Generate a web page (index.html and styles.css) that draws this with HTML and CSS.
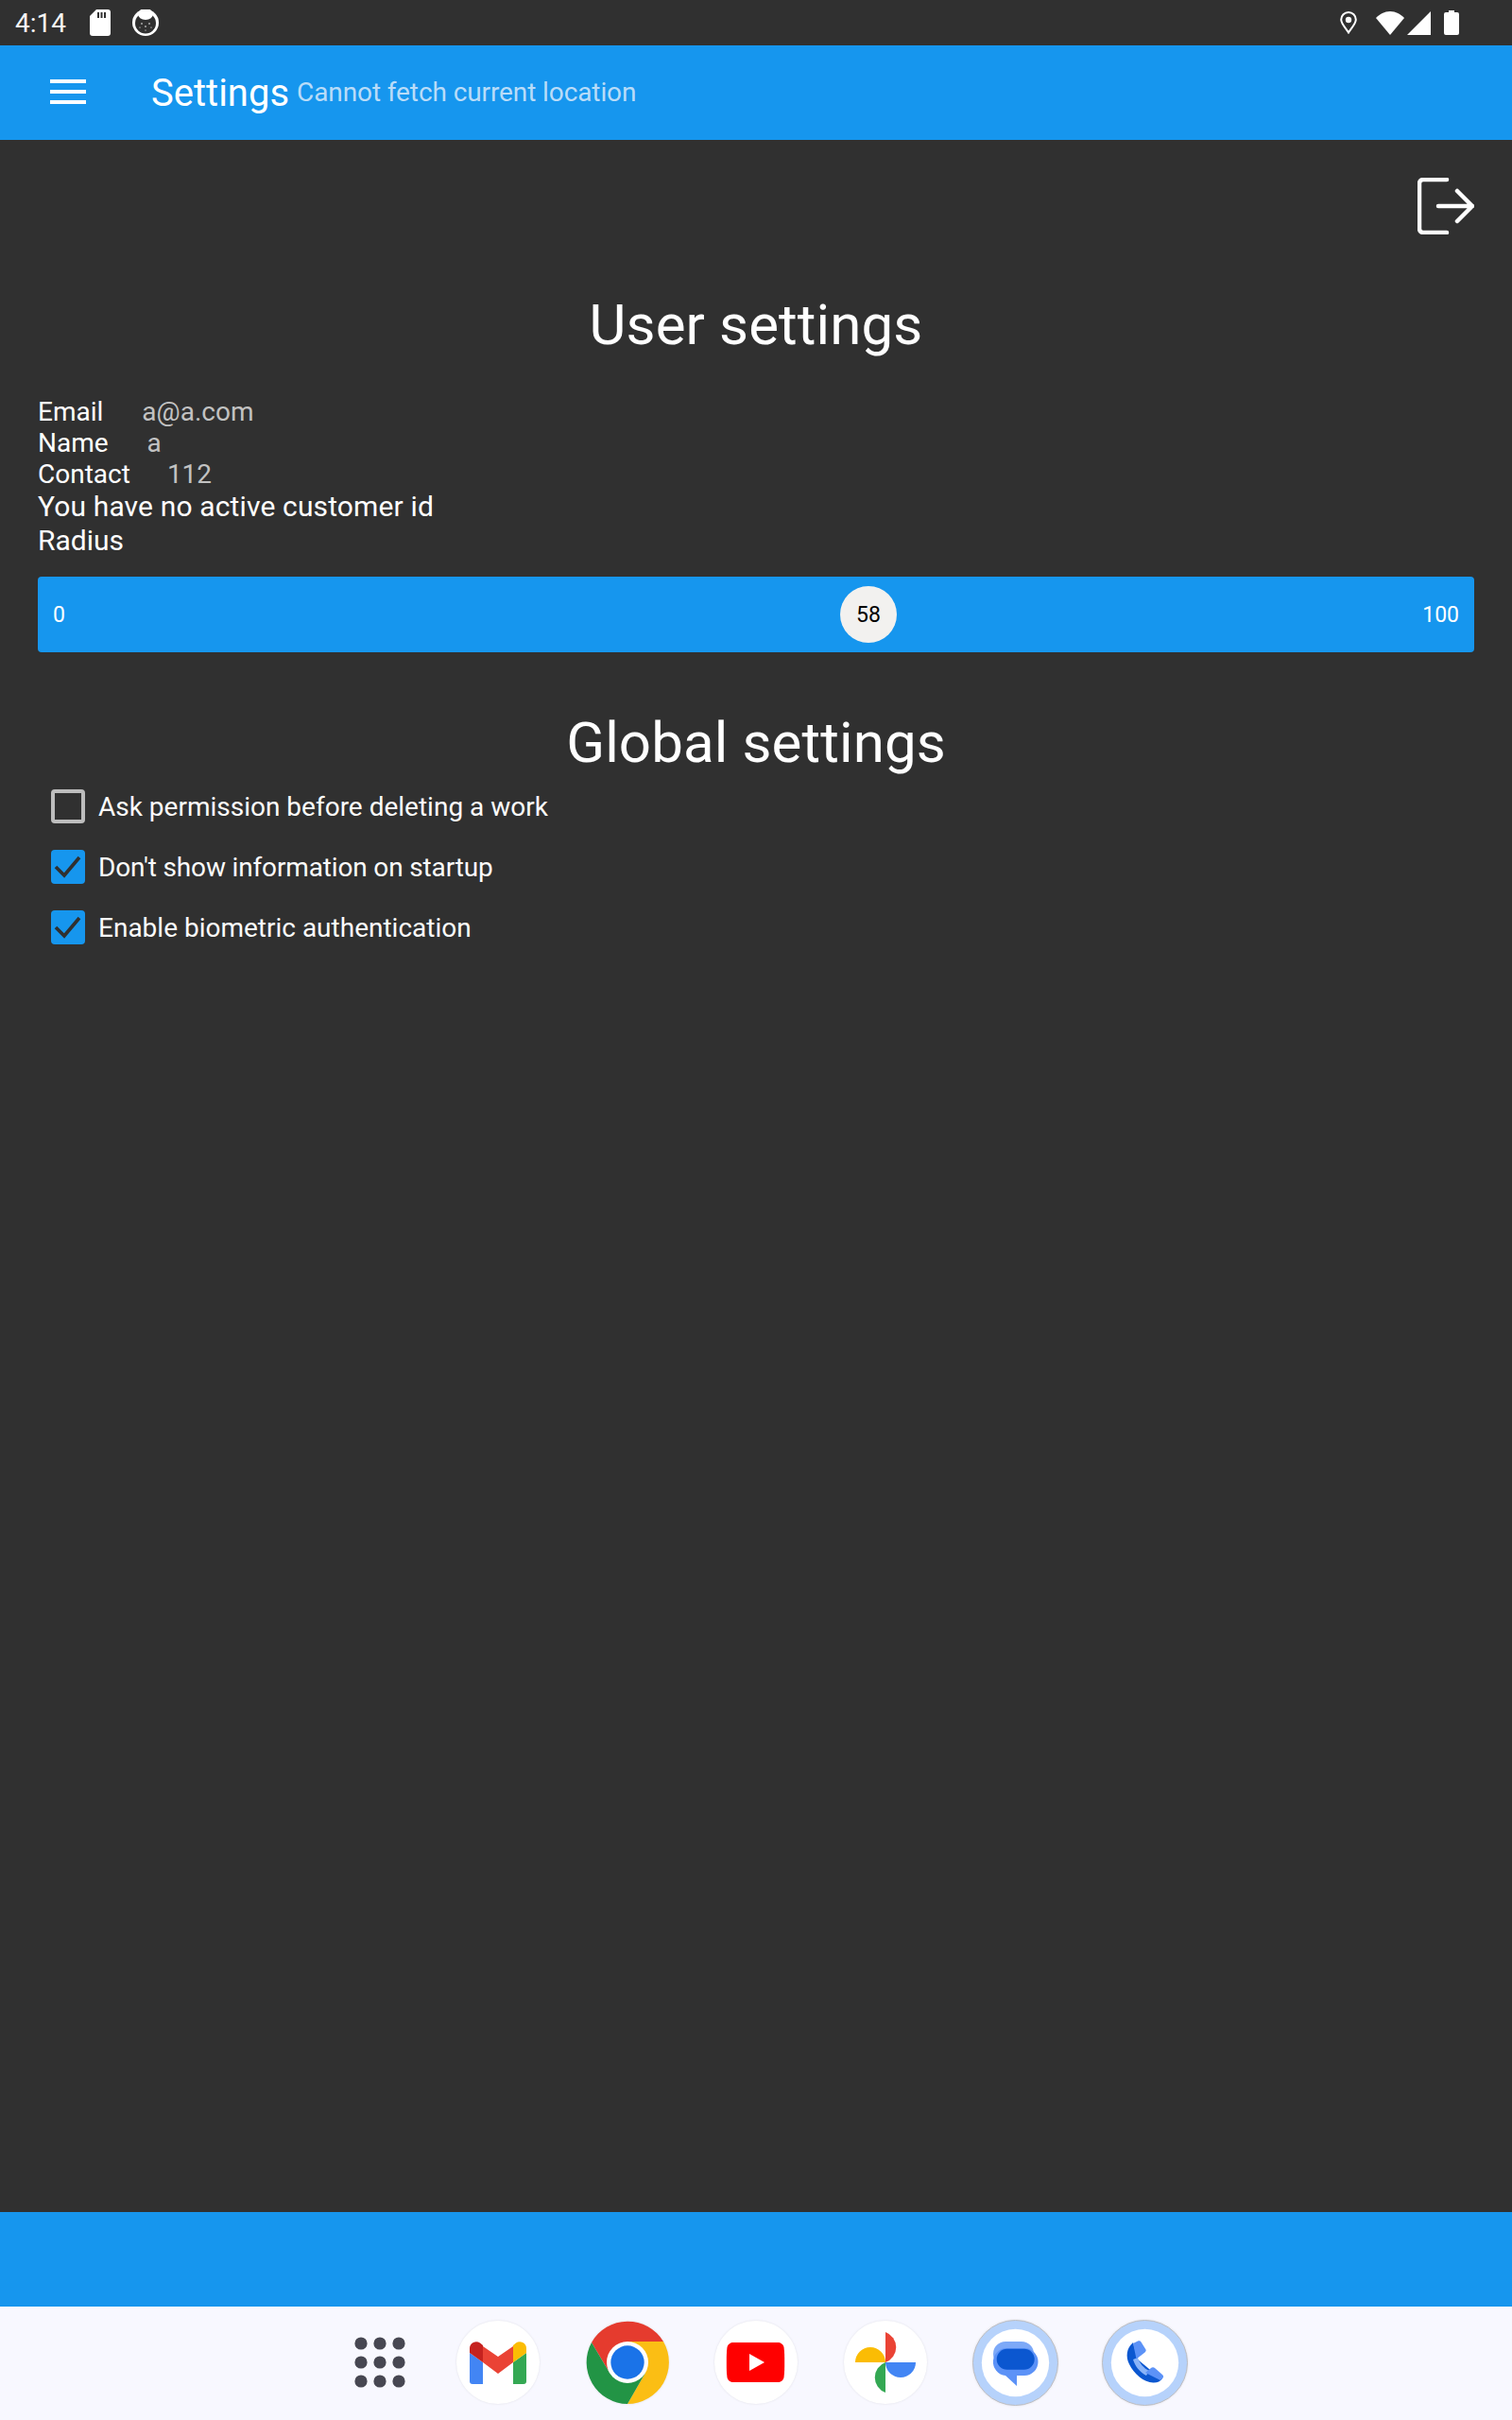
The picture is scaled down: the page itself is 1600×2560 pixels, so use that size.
FILE: index.html
```html
<!DOCTYPE html>
<html lang="en">
<head>
<meta charset="utf-8">
<title>Settings</title>
<link rel="stylesheet" href="styles.css">
</head>
<body>
<div class="screen">
  <div class="status">
    <span class="time">4:14</span>
    <svg class="ic-sd" viewBox="0 0 22 28"><path fill="#fff" d="M7 0h12a3 3 0 0 1 3 3v22a3 3 0 0 1-3 3H3a3 3 0 0 1-3-3V7z"/><path fill="#303030" d="M8 3h2v6H8zM11.500 3h2v6h-2zM15 3h2v6h-2z"/></svg>
    <svg class="ic-cat" viewBox="0 0 28 28"><circle cx="14" cy="14" r="14" fill="#fff"/><circle cx="14" cy="14.500" r="11" fill="#303030"/><ellipse cx="14" cy="5" rx="8" ry="6" fill="#fff"/><g fill="#fff"><circle cx="10" cy="15" r=".8"/><circle cx="18" cy="15" r=".8"/><circle cx="14" cy="18" r=".8"/><circle cx="8" cy="19" r=".6"/><circle cx="20" cy="19" r=".6"/><circle cx="14" cy="22" r=".6"/></g></svg>
    <span class="status-gap"></span>
    <svg class="ic-pin" viewBox="0 0 18 24"><path fill="none" stroke="#fff" stroke-width="2" d="M9 22.500C5.500 17 1.200 13 1.200 8.800a7.800 7.800 0 0 1 15.600 0C16.800 13 12.500 17 9 22.500z"/><circle cx="9" cy="9" r="3.200" fill="#fff"/></svg>
    <svg class="ic-wifi" viewBox="0 0 30 25"><path fill="#fff" d="M15 25 0 7C4 3 9 0 15 0s11 3 15 7z"/></svg>
    <svg class="ic-signal" viewBox="0 0 25 25"><path fill="#fff" d="M25 0v25H0z"/></svg>
    <svg class="ic-batt" viewBox="0 0 16 26"><path fill="#fff" d="M5 0h6v2h3a2 2 0 0 1 2 2v20a2 2 0 0 1-2 2H2a2 2 0 0 1-2-2V4a2 2 0 0 1 2-2h3z"/></svg>
  </div>

  <header class="appbar">
    <svg class="menu" viewBox="0 0 38 26"><path fill="#fff" d="M0 0h38v4H0zM0 11h38v4H0zM0 22h38v4H0z"/></svg>
    <span class="app-title">Settings</span>
    <span class="app-sub">Cannot fetch current location</span>
  </header>

  <main class="content">
    <div class="logout-row">
      <svg class="logout" viewBox="0 0 60 60"><path fill="none" stroke="#fff" stroke-width="4.500" stroke-linecap="round" stroke-linejoin="round" d="M31 2H6a4 4 0 0 0-4 4v48a4 4 0 0 0 4 4h25M22 30h36M42 14l16 16-16 16"/></svg>
    </div>
    <h1 class="heading heading-user">User settings</h1>
    <div class="info">
      <div class="info-line"><span>Email</span><span class="val">a@a.com</span></div>
      <div class="info-line"><span>Name</span><span class="val">a</span></div>
      <div class="info-line"><span>Contact</span><span class="val val-contact">112</span></div>
      <div class="info-line customer">You have no active customer id</div>
      <div class="info-line radius">Radius</div>
    </div>
    <div class="slider">
      <span>0</span>
      <span class="thumb">58</span>
      <span>100</span>
    </div>
    <h1 class="heading heading-global">Global settings</h1>
    <ul class="checks">
      <li class="check"><span class="box"></span>Ask permission before deleting a work</li>
      <li class="check check-tight"><span class="box on"><svg viewBox="0 0 36 36"><path fill="none" stroke="#303030" stroke-width="3.600" d="M5 18l9 9L30 8"/></svg></span>Don't show information on startup</li>
      <li class="check"><span class="box on"><svg viewBox="0 0 36 36"><path fill="none" stroke="#303030" stroke-width="3.600" d="M5 18l9 9L30 8"/></svg></span>Enable biometric authentication</li>
    </ul>
  </main>

  <div class="footer-bar"></div>

  <nav class="dock">
    <svg class="apps" viewBox="0 0 54 54"><g fill="#474752"><circle cx="7" cy="7" r="6.600"/><circle cx="27" cy="7" r="6.600"/><circle cx="47" cy="7" r="6.600"/><circle cx="7" cy="27" r="6.600"/><circle cx="27" cy="27" r="6.600"/><circle cx="47" cy="27" r="6.600"/><circle cx="7" cy="47" r="6.600"/><circle cx="27" cy="47" r="6.600"/><circle cx="47" cy="47" r="6.600"/></g></svg>

    <svg class="dock-ic" viewBox="0 0 88 88"><circle cx="44" cy="44" r="44" fill="#fff"/>
      <path fill="#4285f4" d="M14 34l14 10v23H17a3 3 0 0 1-3-3z"/>
      <path fill="#34a853" d="M60 44l14-10v30a3 3 0 0 1-3 3H60z"/>
      <path fill="#ea4335" d="M28 27l16 11 16-11v17L44 56 28 44z"/>
      <path fill="#c5221f" d="M14 34v-5a7 7 0 0 1 11-5.500l3 2.500v18z"/>
      <path fill="#fbbc04" d="M60 26l3-2.500a7 7 0 0 1 11 5.500v5L60 44z"/>
    </svg>

    <svg class="dock-ic" viewBox="0 0 88 88">
      <path fill="#e53b2e" d="M6 23A44 44 0 0 1 82 22H44L25 55z"/>
      <path fill="#fbbe14" d="M82 22A44 44 0 0 1 44 88L63 55 44 22z"/>
      <path fill="#229445" d="M6 23 25 55H63L44 88A44 44 0 0 1 6 23z"/>
      <circle cx="44" cy="44" r="22" fill="#fff"/><circle cx="44" cy="44" r="17.700" fill="#1a73e8"/>
    </svg>

    <svg class="dock-ic" viewBox="0 0 88 88"><circle cx="44" cy="44" r="44" fill="#fff"/>
      <path fill="#f00" d="M20 23h47c3 0 6 2 6.500 5 .7 5 .7 10 .7 16s0 11-.7 16c-.5 3-3.500 5-6.500 5H20c-3 0-6-2-6.500-5-.7-5-.7-10-.7-16s0-11 .7-16c.5-3 3.500-5 6.500-5z"/>
      <path fill="#fff" d="M37 35l16 9-16 9z"/>
    </svg>

    <svg class="dock-ic" viewBox="0 0 88 88"><circle cx="44" cy="44" r="44" fill="#fff"/>
      <path fill="#ea4335" d="M44 12a17 17 0 0 1 0 32z"/>
      <path fill="#4285f4" d="M44 44h32a16 16 0 0 1-32 0z"/>
      <path fill="#34a853" d="M44 44v32a17 17 0 0 1 0-32z"/>
      <path fill="#fbbc04" d="M44 44H12a16 16 0 0 1 32 0z"/>
    </svg>

    <svg class="dock-ic wide" viewBox="0 0 91 91"><circle cx="45.500" cy="45.500" r="45" fill="#b6d2fb" stroke="#bdbdc0"/><circle cx="45.500" cy="45.500" r="35.700" fill="#fff"/>
      <rect x="22" y="23" width="43" height="26" rx="13" fill="#7da9f8"/>
      <path fill="#5c92f7" d="M38 30h17a14.500 14.500 0 0 1 0 29h-8v11L35 59a14.500 14.500 0 0 1 3-29z"/>
      <rect x="25.700" y="30.700" width="40" height="22" rx="11" fill="#0b57d0"/>
    </svg>

    <svg class="dock-ic wide" viewBox="0 0 91 91"><circle cx="45.500" cy="45.500" r="45" fill="#b6d2fb" stroke="#bdbdc0"/><circle cx="45.500" cy="45.500" r="35.700" fill="#fff"/>
      <path fill="#0b57d0" d="M33 24C26 30 25 39 29 47c5 10 16 20 26 19.500 4 0 7-1.500 9-4.500L50 52 38 42z"/>
      <path fill="#8ab4f8" d="M33 42l5-2c2 6 6 11 12 14l-3 5c-7-4-12-10-14-17z"/>
      <path fill="#5c92f7" d="M33 25l5-2.500c1.500-.5 3 0 3.500 1l5 8c.5 1 0 2-1 3l-9 7zM46 56l6-5c1-1 3-1 4 0l8 7c1.500 1.500 1.500 3 0 4l-2 2z"/>
    </svg>
  </nav>
</div>
</body>
</html>
```
FILE: styles.css
```css
* { box-sizing: border-box; }
html, body { margin: 0; padding: 0; }
body { font-family: Roboto, "Noto Sans", sans-serif; background: #303030; color: #fff; }
.screen { width: 1600px; height: 2560px; display: flex; flex-direction: column; background: #303030; overflow: hidden; }

.status { height: 48px; flex: none; display: flex; align-items: center; padding: 0 56px 0 16px; }
.time { font-size: 28px; font-weight: 400; width: 79px; color: #f5f5f5; }
.ic-sd { width: 22px; height: 28px; }
.ic-cat { width: 28px; height: 28px; margin-left: 23px; }
.status-gap { flex: 1; }
.ic-pin { width: 18px; height: 24px; margin-right: 20px; }
.ic-wifi { width: 30px; height: 25px; margin-right: 3px; }
.ic-signal { width: 25px; height: 25px; margin-right: 14px; }
.ic-batt { width: 16px; height: 26px; }

.appbar { height: 100px; flex: none; background: #1696ee; display: flex; align-items: center; padding-left: 53px; }
.menu { width: 38px; height: 26px; margin: 0 69px 2px 0; }
.app-title { font-size: 40px; margin: 2px 8px 0 0; line-height: 1; }
.app-sub { font-size: 28px; color: #b9dcf8; letter-spacing: -0.1px; margin-bottom: 1px; }

.content { flex: 1; padding: 0 40px; }
.logout-row { display: flex; justify-content: flex-end; padding-top: 40px; height: 112px; }
.logout { width: 60px; height: 60px; }
.heading { margin: 0; font-size: 60px; font-weight: 400; text-align: center; line-height: 70px; letter-spacing: 0.12px; }
.heading-user { margin-top: 49px; }
.info { margin-top: 40px; font-size: 28px; }
.info-line { line-height: 33px; height: 33px; display: flex; }
.val { color: #c2c2c2; margin-left: 41px; }
.val-contact { margin-left: 39px; }
.customer { font-size: 30px; margin-top: 1px; letter-spacing: 0.14px; }
.radius { font-size: 30px; margin-top: 3px; height: 35px; }
.slider { margin-top: 20px; height: 80px; background: #1696ee; border-radius: 4px; display: flex; align-items: center; justify-content: space-between; padding: 0 16px; font-size: 23px; position: relative; }
.thumb { position: absolute; left: 849px; top: 10px; width: 60px; height: 60px; border-radius: 50%; background: #f2f1ef; color: #000; display: flex; align-items: center; justify-content: center; }
.heading-global { margin-top: 61px; }
.checks { list-style: none; margin: 0; padding: 0 0 0 14px; }
.check { display: flex; align-items: center; height: 64px; font-size: 28px; color: #fbfbfb; }
.check-tight { letter-spacing: -0.15px; }
.box { width: 36px; height: 36px; border: 4px solid #bdbdbd; border-radius: 4px; margin-right: 14px; flex: none; }
.box.on { background: #1696ee; border: 0; }
.box svg { display: block; width: 36px; height: 36px; }

.footer-bar { height: 100px; flex: none; background: #1696ee; }
.dock { height: 120px; flex: none; background: #f8f8ff; display: flex; align-items: center; padding: 0 0 2px 375px; }
.apps { width: 54px; height: 54px; margin-right: 54px; }
.dock-ic { width: 88px; height: 88px; margin-right: 48.500px; flex: none; filter: drop-shadow(0 0 1px rgba(0, 0, 0, 0.1)); }
.dock-ic.wide { width: 91px; height: 91px; margin: 0 46px 0 0; }
```
